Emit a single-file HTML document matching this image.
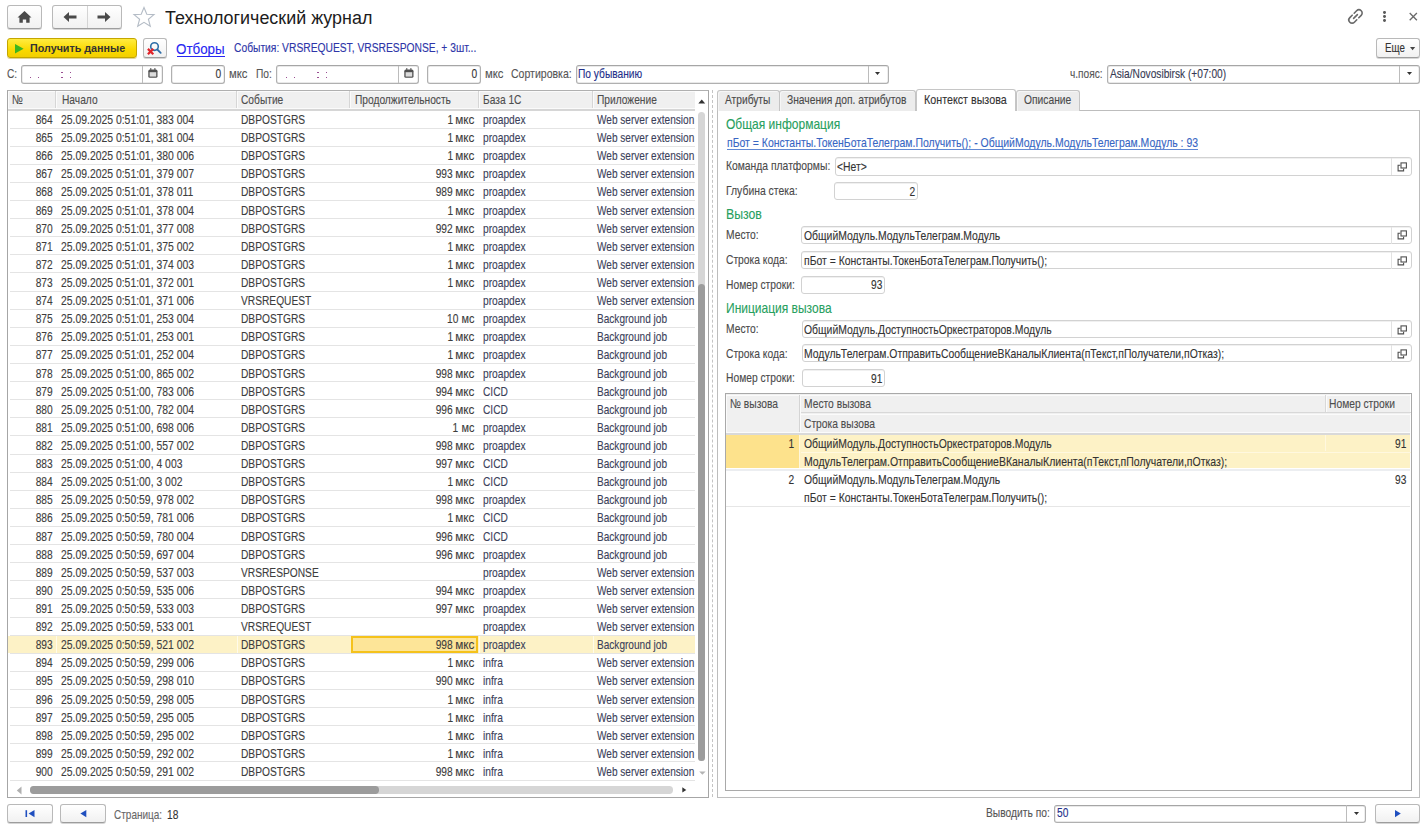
<!DOCTYPE html>
<html><head><meta charset="utf-8"><title>Технологический журнал</title>
<style>
html,body{margin:0;padding:0;background:#fff;width:1428px;height:829px;overflow:hidden;position:relative}
.a{position:absolute}
.t{position:absolute;font-family:"Liberation Sans",sans-serif;white-space:pre;transform-origin:0 0;-webkit-text-stroke:0.12px currentColor}
.tr{transform-origin:100% 0}
</style></head><body>
<div class="a" style="left:7.00px;top:5.00px;width:35.00px;height:24.00px;border:1px solid #b9b9b9;border-bottom-color:#9d9d9d;border-radius:3px;background:linear-gradient(#fff,#f1f1f1);box-sizing:border-box;box-shadow:0 1px 0 #d6d6d6"></div>
<svg class="a" style="left:16px;top:10px" width="17" height="14" viewBox="0 0 17 14"><path d="M8.5 1 L15.5 7.6 L13.6 7.6 L13.6 12.8 L10.2 12.8 L10.2 9.4 L6.8 9.4 L6.8 12.8 L3.4 12.8 L3.4 7.6 L1.5 7.6 Z" fill="#4a4a4a"/></svg>
<div class="a" style="left:52.00px;top:5.00px;width:70.00px;height:24.00px;border:1px solid #b9b9b9;border-bottom-color:#9d9d9d;border-radius:3px;background:linear-gradient(#fff,#f1f1f1);box-sizing:border-box;box-shadow:0 1px 0 #d6d6d6"></div>
<div class="a" style="left:87.00px;top:6.00px;width:1.00px;height:22.00px;background:#d4d4d4"></div>
<svg class="a" style="left:62px;top:11px" width="16" height="12" viewBox="0 0 16 12"><path d="M1.5 6 L7 1 L7 4.6 L14.5 4.6 L14.5 7.4 L7 7.4 L7 11 Z" fill="#4a4a4a"/></svg>
<svg class="a" style="left:96px;top:11px" width="16" height="12" viewBox="0 0 16 12"><path d="M14.5 6 L9 1 L9 4.6 L1.5 4.6 L1.5 7.4 L9 7.4 L9 11 Z" fill="#4a4a4a"/></svg>
<svg class="a" style="left:132px;top:6px" width="24" height="22" viewBox="0 0 24 22"><path d="M12 1.5 L14.8 8.3 L22 8.6 L16.4 13.2 L18.3 20.3 L12 16.3 L5.7 20.3 L7.6 13.2 L2 8.6 L9.2 8.3 Z" fill="none" stroke="#b4bcc6" stroke-width="1.1" stroke-linejoin="miter"/></svg>
<div class="t" style="left:165.00px;top:9.00px;font-size:18px;line-height:18px;color:#1c1c1c;font-weight:normal;transform:scaleX(0.995);-webkit-text-stroke:0;">Технологический журнал</div>
<svg class="a" style="left:1346px;top:7px" width="19" height="19" viewBox="0 0 19 19"><g fill="none" stroke="#6a6a6a" stroke-width="1.6" stroke-linecap="round"><path d="M8.2 6.2 L10.6 3.8 A2.7 2.7 0 0 1 15.2 8.4 L12.8 10.8"/><path d="M10.8 12.8 L8.4 15.2 A2.7 2.7 0 0 1 3.8 10.6 L6.2 8.2"/><path d="M7.6 11.4 L11.4 7.6"/></g></svg>
<div class="a" style="left:1382.80px;top:11.00px;width:2.8px;height:2.8px;border-radius:50%;background:#5a5a5a"></div>
<div class="a" style="left:1382.80px;top:14.90px;width:2.8px;height:2.8px;border-radius:50%;background:#5a5a5a"></div>
<div class="a" style="left:1382.80px;top:18.80px;width:2.8px;height:2.8px;border-radius:50%;background:#5a5a5a"></div>
<svg class="a" style="left:1408px;top:11px" width="11" height="11" viewBox="0 0 11 11"><path d="M1.7 2 L8.9 9.2 M8.9 2 L1.7 9.2" stroke="#6a6a6a" stroke-width="1.3"/></svg>
<div class="a" style="left:7.00px;top:38.00px;width:130.00px;height:19.50px;border:1px solid #c4a600;border-radius:3px;background:linear-gradient(#ffec40,#fad900 60%,#f2cf00);box-sizing:border-box;box-shadow:0 1px 0 #e0d49a"></div>
<svg class="a" style="left:15px;top:44px" width="9" height="10" viewBox="0 0 9 10"><path d="M0 0 L8.6 4.8 L0 9.6 Z" fill="#3cb521"/></svg>
<div class="t" style="left:30.00px;top:43.00px;font-size:11px;line-height:11px;color:#333;font-weight:bold;transform:scaleX(0.975);-webkit-text-stroke:0;">Получить данные</div>
<div class="a" style="left:142.50px;top:38.00px;width:24.50px;height:19.60px;border:1px solid #b9b9b9;border-bottom-color:#9d9d9d;border-radius:3px;background:linear-gradient(#fff,#f1f1f1);box-sizing:border-box;box-shadow:0 1px 0 #d6d6d6"></div>
<svg class="a" style="left:146px;top:41px" width="17" height="15" viewBox="0 0 17 15"><circle cx="8.5" cy="5.6" r="3.8" fill="none" stroke="#2f6ea8" stroke-width="1.6"/><path d="M11.3 8.5 L14.7 11.9" stroke="#2f6ea8" stroke-width="1.8" stroke-linecap="round"/><path d="M1.9 7.9 L7.3 13.3 M7.3 7.9 L1.9 13.3" stroke="#e0242a" stroke-width="2.2"/></svg>
<div class="t" style="left:176.40px;top:41.90px;font-size:14px;line-height:14px;color:#2626f2;font-weight:normal;transform:scaleX(0.955);">Отборы</div>
<div class="a" style="left:176.50px;top:55.70px;width:48.80px;height:1.20px;background:#2626f2"></div>
<div class="t" style="left:233.70px;top:42.20px;font-size:12px;line-height:12px;color:#2d35a8;font-weight:normal;transform:scaleX(0.856);">События: VRSREQUEST, VRSRESPONSE, + 3шт...</div>
<div class="a" style="left:1375.50px;top:38.20px;width:44.50px;height:19.60px;border:1px solid #b9b9b9;border-bottom-color:#9d9d9d;border-radius:3px;background:linear-gradient(#fff,#f1f1f1);box-sizing:border-box;box-shadow:0 1px 0 #d6d6d6"></div>
<div class="t" style="left:1385.30px;top:42.20px;font-size:12px;line-height:12px;color:#333;font-weight:normal;transform:scaleX(0.815);">Еще</div>
<svg class="a" style="left:1410px;top:47px" width="6" height="4" viewBox="0 0 6 4"><path d="M0 0 L5.2 0 L2.6 3.2 Z" fill="#444"/></svg>
<div class="t" style="left:7.00px;top:67.00px;font-size:13px;line-height:13px;color:#555;font-weight:normal;transform:scaleX(0.785);">С:</div>
<div class="a" style="left:20.50px;top:64.70px;width:142.80px;height:18.90px;border:1px solid #b0b0b0;border-top-color:#a6a6a6;border-radius:3px;background:#fff;box-sizing:border-box;box-shadow:inset 0 0 0 0.4px #d4d4d4"></div>
<div class="a" style="left:142.20px;top:65.50px;width:1.00px;height:17.30px;background:#bcbcbc"></div>
<svg class="a" style="left:148px;top:68px" width="10" height="10" viewBox="0 0 10 10"><rect x="0.3" y="1.6" width="9.2" height="8.2" rx="1.6" fill="#505050"/><rect x="1.6" y="4.2" width="6.6" height="4.4" fill="#dcdcdc"/><path d="M2.8 0 V2.6 M6.9 0 V2.6" stroke="#505050" stroke-width="1"/></svg>
<div class="a" style="left:29.55px;top:76.65px;width:1.50px;height:1.50px;background:#9a4e92"></div>
<div class="a" style="left:37.95px;top:76.65px;width:1.50px;height:1.50px;background:#9a4e92"></div>
<div class="a" style="left:61.05px;top:76.65px;width:1.50px;height:1.50px;background:#9a4e92"></div>
<div class="a" style="left:69.65px;top:76.65px;width:1.50px;height:1.50px;background:#9a4e92"></div>
<div class="a" style="left:61.05px;top:71.85px;width:1.50px;height:1.50px;background:#9a4e92"></div>
<div class="a" style="left:69.65px;top:71.85px;width:1.50px;height:1.50px;background:#9a4e92"></div>
<div class="a" style="left:171.40px;top:64.70px;width:53.80px;height:18.90px;border:1px solid #b0b0b0;border-top-color:#a6a6a6;border-radius:3px;background:#fff;box-sizing:border-box;box-shadow:inset 0 0 0 0.4px #d4d4d4"></div>
<div class="t tr" style="right:1206.50px;top:67.00px;font-size:13px;line-height:13px;color:#333;font-weight:normal;transform:scaleX(0.785);">0</div>
<div class="t" style="left:229.00px;top:67.00px;font-size:13px;line-height:13px;color:#555;font-weight:normal;transform:scaleX(0.87);">мкс</div>
<div class="t" style="left:256.00px;top:67.00px;font-size:13px;line-height:13px;color:#555;font-weight:normal;transform:scaleX(0.785);">По:</div>
<div class="a" style="left:276.40px;top:64.70px;width:142.20px;height:18.90px;border:1px solid #b0b0b0;border-top-color:#a6a6a6;border-radius:3px;background:#fff;box-sizing:border-box;box-shadow:inset 0 0 0 0.4px #d4d4d4"></div>
<div class="a" style="left:397.90px;top:65.50px;width:1.00px;height:17.30px;background:#bcbcbc"></div>
<svg class="a" style="left:403.5px;top:68px" width="10" height="10" viewBox="0 0 10 10"><rect x="0.3" y="1.6" width="9.2" height="8.2" rx="1.6" fill="#505050"/><rect x="1.6" y="4.2" width="6.6" height="4.4" fill="#dcdcdc"/><path d="M2.8 0 V2.6 M6.9 0 V2.6" stroke="#505050" stroke-width="1"/></svg>
<div class="a" style="left:285.55px;top:76.65px;width:1.50px;height:1.50px;background:#9a4e92"></div>
<div class="a" style="left:293.95px;top:76.65px;width:1.50px;height:1.50px;background:#9a4e92"></div>
<div class="a" style="left:317.05px;top:76.65px;width:1.50px;height:1.50px;background:#9a4e92"></div>
<div class="a" style="left:325.65px;top:76.65px;width:1.50px;height:1.50px;background:#9a4e92"></div>
<div class="a" style="left:317.05px;top:71.85px;width:1.50px;height:1.50px;background:#9a4e92"></div>
<div class="a" style="left:325.65px;top:71.85px;width:1.50px;height:1.50px;background:#9a4e92"></div>
<div class="a" style="left:426.90px;top:64.70px;width:54.30px;height:18.90px;border:1px solid #b0b0b0;border-top-color:#a6a6a6;border-radius:3px;background:#fff;box-sizing:border-box;box-shadow:inset 0 0 0 0.4px #d4d4d4"></div>
<div class="t tr" style="right:950.50px;top:67.00px;font-size:13px;line-height:13px;color:#333;font-weight:normal;transform:scaleX(0.785);">0</div>
<div class="t" style="left:485.00px;top:67.00px;font-size:13px;line-height:13px;color:#555;font-weight:normal;transform:scaleX(0.87);">мкс</div>
<div class="t" style="left:511.00px;top:67.00px;font-size:13px;line-height:13px;color:#555;font-weight:normal;transform:scaleX(0.81);">Сортировка:</div>
<div class="a" style="left:575.90px;top:64.70px;width:313.00px;height:18.90px;border:1px solid #b0b0b0;border-top-color:#a6a6a6;border-radius:3px;background:#fff;box-sizing:border-box;box-shadow:inset 0 0 0 0.4px #d4d4d4"></div>
<div class="a" style="left:867.70px;top:65.50px;width:1.00px;height:17.30px;background:#bcbcbc"></div>
<div class="t" style="left:578.40px;top:67.00px;font-size:13px;line-height:13px;color:#24308a;font-weight:normal;transform:scaleX(0.785);">По убыванию</div>
<svg class="a" style="left:875px;top:72px" width="6" height="4" viewBox="0 0 6 4"><path d="M0 0 L5 0 L2.5 3 Z" fill="#333"/></svg>
<div class="t" style="left:1070.00px;top:67.00px;font-size:13px;line-height:13px;color:#555;font-weight:normal;transform:scaleX(0.78);">ч.пояс:</div>
<div class="a" style="left:1106.90px;top:64.80px;width:313.10px;height:18.80px;border:1px solid #b0b0b0;border-top-color:#a6a6a6;border-radius:3px;background:#fff;box-sizing:border-box;box-shadow:inset 0 0 0 0.4px #d4d4d4"></div>
<div class="a" style="left:1399.30px;top:65.70px;width:1.00px;height:17.10px;background:#bcbcbc"></div>
<div class="t" style="left:1110.00px;top:67.00px;font-size:13px;line-height:13px;color:#363a52;font-weight:normal;transform:scaleX(0.782);">Asia/Novosibirsk (+07:00)</div>
<svg class="a" style="left:1406.5px;top:72px" width="6" height="4" viewBox="0 0 6 4"><path d="M0 0 L5 0 L2.5 3 Z" fill="#333"/></svg>
<div class="a" style="left:7.00px;top:89.60px;width:702.00px;height:708.20px;border:1px solid #a6a6a6;border-top:1.5px solid #b0b0b0;box-sizing:border-box;background:#fff"></div>
<div class="a" style="left:8.00px;top:90.50px;width:687.00px;height:20.40px;background:#f0f0f0"></div>
<div class="a" style="left:8.00px;top:90.60px;width:687.00px;height:1.20px;background:#fbfbfb"></div>
<div class="a" style="left:8.00px;top:90.60px;width:1.20px;height:17.70px;background:#fbfbfb"></div>
<div class="a" style="left:8.00px;top:108.20px;width:687.00px;height:1.10px;background:#fbfbfb"></div>
<div class="a" style="left:8.00px;top:109.30px;width:687.00px;height:1.60px;background:#d6d6d6"></div>
<div class="a" style="left:55.20px;top:91.00px;width:1.10px;height:17.30px;background:#d6d6d6"></div>
<div class="a" style="left:56.30px;top:91.00px;width:1.00px;height:17.30px;background:#fbfbfb"></div>
<div class="a" style="left:235.70px;top:91.00px;width:1.10px;height:17.30px;background:#d6d6d6"></div>
<div class="a" style="left:236.80px;top:91.00px;width:1.00px;height:17.30px;background:#fbfbfb"></div>
<div class="a" style="left:349.30px;top:91.00px;width:1.10px;height:17.30px;background:#d6d6d6"></div>
<div class="a" style="left:350.40px;top:91.00px;width:1.00px;height:17.30px;background:#fbfbfb"></div>
<div class="a" style="left:478.00px;top:91.00px;width:1.10px;height:17.30px;background:#d6d6d6"></div>
<div class="a" style="left:479.10px;top:91.00px;width:1.00px;height:17.30px;background:#fbfbfb"></div>
<div class="a" style="left:591.80px;top:91.00px;width:1.10px;height:17.30px;background:#d6d6d6"></div>
<div class="a" style="left:592.90px;top:91.00px;width:1.00px;height:17.30px;background:#fbfbfb"></div>
<div class="t" style="left:12.00px;top:93.00px;font-size:13px;line-height:13px;color:#4d4d4d;font-weight:normal;transform:scaleX(0.785);">№</div>
<div class="t" style="left:61.50px;top:93.00px;font-size:13px;line-height:13px;color:#4d4d4d;font-weight:normal;transform:scaleX(0.785);">Начало</div>
<div class="t" style="left:240.70px;top:93.00px;font-size:13px;line-height:13px;color:#4d4d4d;font-weight:normal;transform:scaleX(0.785);">Событие</div>
<div class="t" style="left:354.60px;top:93.00px;font-size:13px;line-height:13px;color:#4d4d4d;font-weight:normal;transform:scaleX(0.785);">Продолжительность</div>
<div class="t" style="left:482.90px;top:93.00px;font-size:13px;line-height:13px;color:#4d4d4d;font-weight:normal;transform:scaleX(0.785);">База 1С</div>
<div class="t" style="left:596.80px;top:93.00px;font-size:13px;line-height:13px;color:#4d4d4d;font-weight:normal;transform:scaleX(0.785);">Приложение</div>
<div class="a" style="left:10.00px;top:127.60px;width:685.00px;height:1.00px;background:#e4e4e4"></div>
<div class="t tr" style="right:1375.20px;top:113.00px;font-size:13px;line-height:13px;color:#3d3d3d;font-weight:normal;transform:scaleX(0.785);">864</div>
<div class="t" style="left:61.00px;top:113.00px;font-size:13px;line-height:13px;color:#3d3d3d;font-weight:normal;transform:scaleX(0.8);">25.09.2025 0:51:01, 383 004</div>
<div class="t" style="left:240.70px;top:113.00px;font-size:13px;line-height:13px;color:#3d3d3d;font-weight:normal;transform:scaleX(0.785);">DBPOSTGRS</div>
<div class="t tr" style="right:975.20px;top:113.00px;font-size:13px;line-height:13px;color:#3d3d3d;font-weight:normal;transform:scaleX(0.785);">1</div>
<div class="t tr" style="right:953.60px;top:113.00px;font-size:13px;line-height:13px;color:#3d3d3d;font-weight:normal;transform:scaleX(0.9);">мкс</div>
<div class="t" style="left:482.90px;top:113.00px;font-size:13px;line-height:13px;color:#3b3f5a;font-weight:normal;transform:scaleX(0.785);">proapdex</div>
<div class="t" style="left:596.80px;top:113.00px;font-size:13px;line-height:13px;color:#3b3f5a;font-weight:normal;transform:scaleX(0.775);">Web server extension</div>
<div class="a" style="left:10.00px;top:145.71px;width:685.00px;height:1.00px;background:#e4e4e4"></div>
<div class="t tr" style="right:1375.20px;top:131.11px;font-size:13px;line-height:13px;color:#3d3d3d;font-weight:normal;transform:scaleX(0.785);">865</div>
<div class="t" style="left:61.00px;top:131.11px;font-size:13px;line-height:13px;color:#3d3d3d;font-weight:normal;transform:scaleX(0.8);">25.09.2025 0:51:01, 381 004</div>
<div class="t" style="left:240.70px;top:131.11px;font-size:13px;line-height:13px;color:#3d3d3d;font-weight:normal;transform:scaleX(0.785);">DBPOSTGRS</div>
<div class="t tr" style="right:975.20px;top:131.11px;font-size:13px;line-height:13px;color:#3d3d3d;font-weight:normal;transform:scaleX(0.785);">1</div>
<div class="t tr" style="right:953.60px;top:131.11px;font-size:13px;line-height:13px;color:#3d3d3d;font-weight:normal;transform:scaleX(0.9);">мкс</div>
<div class="t" style="left:482.90px;top:131.11px;font-size:13px;line-height:13px;color:#3b3f5a;font-weight:normal;transform:scaleX(0.785);">proapdex</div>
<div class="t" style="left:596.80px;top:131.11px;font-size:13px;line-height:13px;color:#3b3f5a;font-weight:normal;transform:scaleX(0.775);">Web server extension</div>
<div class="a" style="left:10.00px;top:163.82px;width:685.00px;height:1.00px;background:#e4e4e4"></div>
<div class="t tr" style="right:1375.20px;top:149.22px;font-size:13px;line-height:13px;color:#3d3d3d;font-weight:normal;transform:scaleX(0.785);">866</div>
<div class="t" style="left:61.00px;top:149.22px;font-size:13px;line-height:13px;color:#3d3d3d;font-weight:normal;transform:scaleX(0.8);">25.09.2025 0:51:01, 380 006</div>
<div class="t" style="left:240.70px;top:149.22px;font-size:13px;line-height:13px;color:#3d3d3d;font-weight:normal;transform:scaleX(0.785);">DBPOSTGRS</div>
<div class="t tr" style="right:975.20px;top:149.22px;font-size:13px;line-height:13px;color:#3d3d3d;font-weight:normal;transform:scaleX(0.785);">1</div>
<div class="t tr" style="right:953.60px;top:149.22px;font-size:13px;line-height:13px;color:#3d3d3d;font-weight:normal;transform:scaleX(0.9);">мкс</div>
<div class="t" style="left:482.90px;top:149.22px;font-size:13px;line-height:13px;color:#3b3f5a;font-weight:normal;transform:scaleX(0.785);">proapdex</div>
<div class="t" style="left:596.80px;top:149.22px;font-size:13px;line-height:13px;color:#3b3f5a;font-weight:normal;transform:scaleX(0.775);">Web server extension</div>
<div class="a" style="left:10.00px;top:181.93px;width:685.00px;height:1.00px;background:#e4e4e4"></div>
<div class="t tr" style="right:1375.20px;top:167.33px;font-size:13px;line-height:13px;color:#3d3d3d;font-weight:normal;transform:scaleX(0.785);">867</div>
<div class="t" style="left:61.00px;top:167.33px;font-size:13px;line-height:13px;color:#3d3d3d;font-weight:normal;transform:scaleX(0.8);">25.09.2025 0:51:01, 379 007</div>
<div class="t" style="left:240.70px;top:167.33px;font-size:13px;line-height:13px;color:#3d3d3d;font-weight:normal;transform:scaleX(0.785);">DBPOSTGRS</div>
<div class="t tr" style="right:975.20px;top:167.33px;font-size:13px;line-height:13px;color:#3d3d3d;font-weight:normal;transform:scaleX(0.785);">993</div>
<div class="t tr" style="right:953.60px;top:167.33px;font-size:13px;line-height:13px;color:#3d3d3d;font-weight:normal;transform:scaleX(0.9);">мкс</div>
<div class="t" style="left:482.90px;top:167.33px;font-size:13px;line-height:13px;color:#3b3f5a;font-weight:normal;transform:scaleX(0.785);">proapdex</div>
<div class="t" style="left:596.80px;top:167.33px;font-size:13px;line-height:13px;color:#3b3f5a;font-weight:normal;transform:scaleX(0.775);">Web server extension</div>
<div class="a" style="left:10.00px;top:200.04px;width:685.00px;height:1.00px;background:#e4e4e4"></div>
<div class="t tr" style="right:1375.20px;top:185.44px;font-size:13px;line-height:13px;color:#3d3d3d;font-weight:normal;transform:scaleX(0.785);">868</div>
<div class="t" style="left:61.00px;top:185.44px;font-size:13px;line-height:13px;color:#3d3d3d;font-weight:normal;transform:scaleX(0.8);">25.09.2025 0:51:01, 378 011</div>
<div class="t" style="left:240.70px;top:185.44px;font-size:13px;line-height:13px;color:#3d3d3d;font-weight:normal;transform:scaleX(0.785);">DBPOSTGRS</div>
<div class="t tr" style="right:975.20px;top:185.44px;font-size:13px;line-height:13px;color:#3d3d3d;font-weight:normal;transform:scaleX(0.785);">989</div>
<div class="t tr" style="right:953.60px;top:185.44px;font-size:13px;line-height:13px;color:#3d3d3d;font-weight:normal;transform:scaleX(0.9);">мкс</div>
<div class="t" style="left:482.90px;top:185.44px;font-size:13px;line-height:13px;color:#3b3f5a;font-weight:normal;transform:scaleX(0.785);">proapdex</div>
<div class="t" style="left:596.80px;top:185.44px;font-size:13px;line-height:13px;color:#3b3f5a;font-weight:normal;transform:scaleX(0.775);">Web server extension</div>
<div class="a" style="left:10.00px;top:218.15px;width:685.00px;height:1.00px;background:#e4e4e4"></div>
<div class="t tr" style="right:1375.20px;top:203.55px;font-size:13px;line-height:13px;color:#3d3d3d;font-weight:normal;transform:scaleX(0.785);">869</div>
<div class="t" style="left:61.00px;top:203.55px;font-size:13px;line-height:13px;color:#3d3d3d;font-weight:normal;transform:scaleX(0.8);">25.09.2025 0:51:01, 378 004</div>
<div class="t" style="left:240.70px;top:203.55px;font-size:13px;line-height:13px;color:#3d3d3d;font-weight:normal;transform:scaleX(0.785);">DBPOSTGRS</div>
<div class="t tr" style="right:975.20px;top:203.55px;font-size:13px;line-height:13px;color:#3d3d3d;font-weight:normal;transform:scaleX(0.785);">1</div>
<div class="t tr" style="right:953.60px;top:203.55px;font-size:13px;line-height:13px;color:#3d3d3d;font-weight:normal;transform:scaleX(0.9);">мкс</div>
<div class="t" style="left:482.90px;top:203.55px;font-size:13px;line-height:13px;color:#3b3f5a;font-weight:normal;transform:scaleX(0.785);">proapdex</div>
<div class="t" style="left:596.80px;top:203.55px;font-size:13px;line-height:13px;color:#3b3f5a;font-weight:normal;transform:scaleX(0.775);">Web server extension</div>
<div class="a" style="left:10.00px;top:236.26px;width:685.00px;height:1.00px;background:#e4e4e4"></div>
<div class="t tr" style="right:1375.20px;top:221.66px;font-size:13px;line-height:13px;color:#3d3d3d;font-weight:normal;transform:scaleX(0.785);">870</div>
<div class="t" style="left:61.00px;top:221.66px;font-size:13px;line-height:13px;color:#3d3d3d;font-weight:normal;transform:scaleX(0.8);">25.09.2025 0:51:01, 377 008</div>
<div class="t" style="left:240.70px;top:221.66px;font-size:13px;line-height:13px;color:#3d3d3d;font-weight:normal;transform:scaleX(0.785);">DBPOSTGRS</div>
<div class="t tr" style="right:975.20px;top:221.66px;font-size:13px;line-height:13px;color:#3d3d3d;font-weight:normal;transform:scaleX(0.785);">992</div>
<div class="t tr" style="right:953.60px;top:221.66px;font-size:13px;line-height:13px;color:#3d3d3d;font-weight:normal;transform:scaleX(0.9);">мкс</div>
<div class="t" style="left:482.90px;top:221.66px;font-size:13px;line-height:13px;color:#3b3f5a;font-weight:normal;transform:scaleX(0.785);">proapdex</div>
<div class="t" style="left:596.80px;top:221.66px;font-size:13px;line-height:13px;color:#3b3f5a;font-weight:normal;transform:scaleX(0.775);">Web server extension</div>
<div class="a" style="left:10.00px;top:254.37px;width:685.00px;height:1.00px;background:#e4e4e4"></div>
<div class="t tr" style="right:1375.20px;top:239.77px;font-size:13px;line-height:13px;color:#3d3d3d;font-weight:normal;transform:scaleX(0.785);">871</div>
<div class="t" style="left:61.00px;top:239.77px;font-size:13px;line-height:13px;color:#3d3d3d;font-weight:normal;transform:scaleX(0.8);">25.09.2025 0:51:01, 375 002</div>
<div class="t" style="left:240.70px;top:239.77px;font-size:13px;line-height:13px;color:#3d3d3d;font-weight:normal;transform:scaleX(0.785);">DBPOSTGRS</div>
<div class="t tr" style="right:975.20px;top:239.77px;font-size:13px;line-height:13px;color:#3d3d3d;font-weight:normal;transform:scaleX(0.785);">1</div>
<div class="t tr" style="right:953.60px;top:239.77px;font-size:13px;line-height:13px;color:#3d3d3d;font-weight:normal;transform:scaleX(0.9);">мкс</div>
<div class="t" style="left:482.90px;top:239.77px;font-size:13px;line-height:13px;color:#3b3f5a;font-weight:normal;transform:scaleX(0.785);">proapdex</div>
<div class="t" style="left:596.80px;top:239.77px;font-size:13px;line-height:13px;color:#3b3f5a;font-weight:normal;transform:scaleX(0.775);">Web server extension</div>
<div class="a" style="left:10.00px;top:272.48px;width:685.00px;height:1.00px;background:#e4e4e4"></div>
<div class="t tr" style="right:1375.20px;top:257.88px;font-size:13px;line-height:13px;color:#3d3d3d;font-weight:normal;transform:scaleX(0.785);">872</div>
<div class="t" style="left:61.00px;top:257.88px;font-size:13px;line-height:13px;color:#3d3d3d;font-weight:normal;transform:scaleX(0.8);">25.09.2025 0:51:01, 374 003</div>
<div class="t" style="left:240.70px;top:257.88px;font-size:13px;line-height:13px;color:#3d3d3d;font-weight:normal;transform:scaleX(0.785);">DBPOSTGRS</div>
<div class="t tr" style="right:975.20px;top:257.88px;font-size:13px;line-height:13px;color:#3d3d3d;font-weight:normal;transform:scaleX(0.785);">1</div>
<div class="t tr" style="right:953.60px;top:257.88px;font-size:13px;line-height:13px;color:#3d3d3d;font-weight:normal;transform:scaleX(0.9);">мкс</div>
<div class="t" style="left:482.90px;top:257.88px;font-size:13px;line-height:13px;color:#3b3f5a;font-weight:normal;transform:scaleX(0.785);">proapdex</div>
<div class="t" style="left:596.80px;top:257.88px;font-size:13px;line-height:13px;color:#3b3f5a;font-weight:normal;transform:scaleX(0.775);">Web server extension</div>
<div class="a" style="left:10.00px;top:290.59px;width:685.00px;height:1.00px;background:#e4e4e4"></div>
<div class="t tr" style="right:1375.20px;top:275.99px;font-size:13px;line-height:13px;color:#3d3d3d;font-weight:normal;transform:scaleX(0.785);">873</div>
<div class="t" style="left:61.00px;top:275.99px;font-size:13px;line-height:13px;color:#3d3d3d;font-weight:normal;transform:scaleX(0.8);">25.09.2025 0:51:01, 372 001</div>
<div class="t" style="left:240.70px;top:275.99px;font-size:13px;line-height:13px;color:#3d3d3d;font-weight:normal;transform:scaleX(0.785);">DBPOSTGRS</div>
<div class="t tr" style="right:975.20px;top:275.99px;font-size:13px;line-height:13px;color:#3d3d3d;font-weight:normal;transform:scaleX(0.785);">1</div>
<div class="t tr" style="right:953.60px;top:275.99px;font-size:13px;line-height:13px;color:#3d3d3d;font-weight:normal;transform:scaleX(0.9);">мкс</div>
<div class="t" style="left:482.90px;top:275.99px;font-size:13px;line-height:13px;color:#3b3f5a;font-weight:normal;transform:scaleX(0.785);">proapdex</div>
<div class="t" style="left:596.80px;top:275.99px;font-size:13px;line-height:13px;color:#3b3f5a;font-weight:normal;transform:scaleX(0.775);">Web server extension</div>
<div class="a" style="left:10.00px;top:308.70px;width:685.00px;height:1.00px;background:#e4e4e4"></div>
<div class="t tr" style="right:1375.20px;top:294.10px;font-size:13px;line-height:13px;color:#3d3d3d;font-weight:normal;transform:scaleX(0.785);">874</div>
<div class="t" style="left:61.00px;top:294.10px;font-size:13px;line-height:13px;color:#3d3d3d;font-weight:normal;transform:scaleX(0.8);">25.09.2025 0:51:01, 371 006</div>
<div class="t" style="left:240.70px;top:294.10px;font-size:13px;line-height:13px;color:#3d3d3d;font-weight:normal;transform:scaleX(0.785);">VRSREQUEST</div>
<div class="t" style="left:482.90px;top:294.10px;font-size:13px;line-height:13px;color:#3b3f5a;font-weight:normal;transform:scaleX(0.785);">proapdex</div>
<div class="t" style="left:596.80px;top:294.10px;font-size:13px;line-height:13px;color:#3b3f5a;font-weight:normal;transform:scaleX(0.775);">Web server extension</div>
<div class="a" style="left:10.00px;top:326.81px;width:685.00px;height:1.00px;background:#e4e4e4"></div>
<div class="t tr" style="right:1375.20px;top:312.21px;font-size:13px;line-height:13px;color:#3d3d3d;font-weight:normal;transform:scaleX(0.785);">875</div>
<div class="t" style="left:61.00px;top:312.21px;font-size:13px;line-height:13px;color:#3d3d3d;font-weight:normal;transform:scaleX(0.8);">25.09.2025 0:51:01, 253 004</div>
<div class="t" style="left:240.70px;top:312.21px;font-size:13px;line-height:13px;color:#3d3d3d;font-weight:normal;transform:scaleX(0.785);">DBPOSTGRS</div>
<div class="t tr" style="right:969.70px;top:312.21px;font-size:13px;line-height:13px;color:#3d3d3d;font-weight:normal;transform:scaleX(0.785);">10</div>
<div class="t tr" style="right:953.60px;top:312.21px;font-size:13px;line-height:13px;color:#3d3d3d;font-weight:normal;transform:scaleX(0.84);">мс</div>
<div class="t" style="left:482.90px;top:312.21px;font-size:13px;line-height:13px;color:#3b3f5a;font-weight:normal;transform:scaleX(0.785);">proapdex</div>
<div class="t" style="left:596.80px;top:312.21px;font-size:13px;line-height:13px;color:#3b3f5a;font-weight:normal;transform:scaleX(0.775);">Background job</div>
<div class="a" style="left:10.00px;top:344.92px;width:685.00px;height:1.00px;background:#e4e4e4"></div>
<div class="t tr" style="right:1375.20px;top:330.32px;font-size:13px;line-height:13px;color:#3d3d3d;font-weight:normal;transform:scaleX(0.785);">876</div>
<div class="t" style="left:61.00px;top:330.32px;font-size:13px;line-height:13px;color:#3d3d3d;font-weight:normal;transform:scaleX(0.8);">25.09.2025 0:51:01, 253 001</div>
<div class="t" style="left:240.70px;top:330.32px;font-size:13px;line-height:13px;color:#3d3d3d;font-weight:normal;transform:scaleX(0.785);">DBPOSTGRS</div>
<div class="t tr" style="right:975.20px;top:330.32px;font-size:13px;line-height:13px;color:#3d3d3d;font-weight:normal;transform:scaleX(0.785);">1</div>
<div class="t tr" style="right:953.60px;top:330.32px;font-size:13px;line-height:13px;color:#3d3d3d;font-weight:normal;transform:scaleX(0.9);">мкс</div>
<div class="t" style="left:482.90px;top:330.32px;font-size:13px;line-height:13px;color:#3b3f5a;font-weight:normal;transform:scaleX(0.785);">proapdex</div>
<div class="t" style="left:596.80px;top:330.32px;font-size:13px;line-height:13px;color:#3b3f5a;font-weight:normal;transform:scaleX(0.775);">Background job</div>
<div class="a" style="left:10.00px;top:363.03px;width:685.00px;height:1.00px;background:#e4e4e4"></div>
<div class="t tr" style="right:1375.20px;top:348.43px;font-size:13px;line-height:13px;color:#3d3d3d;font-weight:normal;transform:scaleX(0.785);">877</div>
<div class="t" style="left:61.00px;top:348.43px;font-size:13px;line-height:13px;color:#3d3d3d;font-weight:normal;transform:scaleX(0.8);">25.09.2025 0:51:01, 252 004</div>
<div class="t" style="left:240.70px;top:348.43px;font-size:13px;line-height:13px;color:#3d3d3d;font-weight:normal;transform:scaleX(0.785);">DBPOSTGRS</div>
<div class="t tr" style="right:975.20px;top:348.43px;font-size:13px;line-height:13px;color:#3d3d3d;font-weight:normal;transform:scaleX(0.785);">1</div>
<div class="t tr" style="right:953.60px;top:348.43px;font-size:13px;line-height:13px;color:#3d3d3d;font-weight:normal;transform:scaleX(0.9);">мкс</div>
<div class="t" style="left:482.90px;top:348.43px;font-size:13px;line-height:13px;color:#3b3f5a;font-weight:normal;transform:scaleX(0.785);">proapdex</div>
<div class="t" style="left:596.80px;top:348.43px;font-size:13px;line-height:13px;color:#3b3f5a;font-weight:normal;transform:scaleX(0.775);">Background job</div>
<div class="a" style="left:10.00px;top:381.14px;width:685.00px;height:1.00px;background:#e4e4e4"></div>
<div class="t tr" style="right:1375.20px;top:366.54px;font-size:13px;line-height:13px;color:#3d3d3d;font-weight:normal;transform:scaleX(0.785);">878</div>
<div class="t" style="left:61.00px;top:366.54px;font-size:13px;line-height:13px;color:#3d3d3d;font-weight:normal;transform:scaleX(0.8);">25.09.2025 0:51:00, 865 002</div>
<div class="t" style="left:240.70px;top:366.54px;font-size:13px;line-height:13px;color:#3d3d3d;font-weight:normal;transform:scaleX(0.785);">DBPOSTGRS</div>
<div class="t tr" style="right:975.20px;top:366.54px;font-size:13px;line-height:13px;color:#3d3d3d;font-weight:normal;transform:scaleX(0.785);">998</div>
<div class="t tr" style="right:953.60px;top:366.54px;font-size:13px;line-height:13px;color:#3d3d3d;font-weight:normal;transform:scaleX(0.9);">мкс</div>
<div class="t" style="left:482.90px;top:366.54px;font-size:13px;line-height:13px;color:#3b3f5a;font-weight:normal;transform:scaleX(0.785);">proapdex</div>
<div class="t" style="left:596.80px;top:366.54px;font-size:13px;line-height:13px;color:#3b3f5a;font-weight:normal;transform:scaleX(0.775);">Background job</div>
<div class="a" style="left:10.00px;top:399.25px;width:685.00px;height:1.00px;background:#e4e4e4"></div>
<div class="t tr" style="right:1375.20px;top:384.65px;font-size:13px;line-height:13px;color:#3d3d3d;font-weight:normal;transform:scaleX(0.785);">879</div>
<div class="t" style="left:61.00px;top:384.65px;font-size:13px;line-height:13px;color:#3d3d3d;font-weight:normal;transform:scaleX(0.8);">25.09.2025 0:51:00, 783 006</div>
<div class="t" style="left:240.70px;top:384.65px;font-size:13px;line-height:13px;color:#3d3d3d;font-weight:normal;transform:scaleX(0.785);">DBPOSTGRS</div>
<div class="t tr" style="right:975.20px;top:384.65px;font-size:13px;line-height:13px;color:#3d3d3d;font-weight:normal;transform:scaleX(0.785);">994</div>
<div class="t tr" style="right:953.60px;top:384.65px;font-size:13px;line-height:13px;color:#3d3d3d;font-weight:normal;transform:scaleX(0.9);">мкс</div>
<div class="t" style="left:482.90px;top:384.65px;font-size:13px;line-height:13px;color:#3b3f5a;font-weight:normal;transform:scaleX(0.785);">CICD</div>
<div class="t" style="left:596.80px;top:384.65px;font-size:13px;line-height:13px;color:#3b3f5a;font-weight:normal;transform:scaleX(0.775);">Background job</div>
<div class="a" style="left:10.00px;top:417.36px;width:685.00px;height:1.00px;background:#e4e4e4"></div>
<div class="t tr" style="right:1375.20px;top:402.76px;font-size:13px;line-height:13px;color:#3d3d3d;font-weight:normal;transform:scaleX(0.785);">880</div>
<div class="t" style="left:61.00px;top:402.76px;font-size:13px;line-height:13px;color:#3d3d3d;font-weight:normal;transform:scaleX(0.8);">25.09.2025 0:51:00, 782 004</div>
<div class="t" style="left:240.70px;top:402.76px;font-size:13px;line-height:13px;color:#3d3d3d;font-weight:normal;transform:scaleX(0.785);">DBPOSTGRS</div>
<div class="t tr" style="right:975.20px;top:402.76px;font-size:13px;line-height:13px;color:#3d3d3d;font-weight:normal;transform:scaleX(0.785);">996</div>
<div class="t tr" style="right:953.60px;top:402.76px;font-size:13px;line-height:13px;color:#3d3d3d;font-weight:normal;transform:scaleX(0.9);">мкс</div>
<div class="t" style="left:482.90px;top:402.76px;font-size:13px;line-height:13px;color:#3b3f5a;font-weight:normal;transform:scaleX(0.785);">CICD</div>
<div class="t" style="left:596.80px;top:402.76px;font-size:13px;line-height:13px;color:#3b3f5a;font-weight:normal;transform:scaleX(0.775);">Background job</div>
<div class="a" style="left:10.00px;top:435.47px;width:685.00px;height:1.00px;background:#e4e4e4"></div>
<div class="t tr" style="right:1375.20px;top:420.87px;font-size:13px;line-height:13px;color:#3d3d3d;font-weight:normal;transform:scaleX(0.785);">881</div>
<div class="t" style="left:61.00px;top:420.87px;font-size:13px;line-height:13px;color:#3d3d3d;font-weight:normal;transform:scaleX(0.8);">25.09.2025 0:51:00, 698 006</div>
<div class="t" style="left:240.70px;top:420.87px;font-size:13px;line-height:13px;color:#3d3d3d;font-weight:normal;transform:scaleX(0.785);">DBPOSTGRS</div>
<div class="t tr" style="right:969.70px;top:420.87px;font-size:13px;line-height:13px;color:#3d3d3d;font-weight:normal;transform:scaleX(0.785);">1</div>
<div class="t tr" style="right:953.60px;top:420.87px;font-size:13px;line-height:13px;color:#3d3d3d;font-weight:normal;transform:scaleX(0.84);">мс</div>
<div class="t" style="left:482.90px;top:420.87px;font-size:13px;line-height:13px;color:#3b3f5a;font-weight:normal;transform:scaleX(0.785);">proapdex</div>
<div class="t" style="left:596.80px;top:420.87px;font-size:13px;line-height:13px;color:#3b3f5a;font-weight:normal;transform:scaleX(0.775);">Background job</div>
<div class="a" style="left:10.00px;top:453.58px;width:685.00px;height:1.00px;background:#e4e4e4"></div>
<div class="t tr" style="right:1375.20px;top:438.98px;font-size:13px;line-height:13px;color:#3d3d3d;font-weight:normal;transform:scaleX(0.785);">882</div>
<div class="t" style="left:61.00px;top:438.98px;font-size:13px;line-height:13px;color:#3d3d3d;font-weight:normal;transform:scaleX(0.8);">25.09.2025 0:51:00, 557 002</div>
<div class="t" style="left:240.70px;top:438.98px;font-size:13px;line-height:13px;color:#3d3d3d;font-weight:normal;transform:scaleX(0.785);">DBPOSTGRS</div>
<div class="t tr" style="right:975.20px;top:438.98px;font-size:13px;line-height:13px;color:#3d3d3d;font-weight:normal;transform:scaleX(0.785);">998</div>
<div class="t tr" style="right:953.60px;top:438.98px;font-size:13px;line-height:13px;color:#3d3d3d;font-weight:normal;transform:scaleX(0.9);">мкс</div>
<div class="t" style="left:482.90px;top:438.98px;font-size:13px;line-height:13px;color:#3b3f5a;font-weight:normal;transform:scaleX(0.785);">proapdex</div>
<div class="t" style="left:596.80px;top:438.98px;font-size:13px;line-height:13px;color:#3b3f5a;font-weight:normal;transform:scaleX(0.775);">Background job</div>
<div class="a" style="left:10.00px;top:471.69px;width:685.00px;height:1.00px;background:#e4e4e4"></div>
<div class="t tr" style="right:1375.20px;top:457.09px;font-size:13px;line-height:13px;color:#3d3d3d;font-weight:normal;transform:scaleX(0.785);">883</div>
<div class="t" style="left:61.00px;top:457.09px;font-size:13px;line-height:13px;color:#3d3d3d;font-weight:normal;transform:scaleX(0.8);">25.09.2025 0:51:00, 4 003</div>
<div class="t" style="left:240.70px;top:457.09px;font-size:13px;line-height:13px;color:#3d3d3d;font-weight:normal;transform:scaleX(0.785);">DBPOSTGRS</div>
<div class="t tr" style="right:975.20px;top:457.09px;font-size:13px;line-height:13px;color:#3d3d3d;font-weight:normal;transform:scaleX(0.785);">997</div>
<div class="t tr" style="right:953.60px;top:457.09px;font-size:13px;line-height:13px;color:#3d3d3d;font-weight:normal;transform:scaleX(0.9);">мкс</div>
<div class="t" style="left:482.90px;top:457.09px;font-size:13px;line-height:13px;color:#3b3f5a;font-weight:normal;transform:scaleX(0.785);">CICD</div>
<div class="t" style="left:596.80px;top:457.09px;font-size:13px;line-height:13px;color:#3b3f5a;font-weight:normal;transform:scaleX(0.775);">Background job</div>
<div class="a" style="left:10.00px;top:489.80px;width:685.00px;height:1.00px;background:#e4e4e4"></div>
<div class="t tr" style="right:1375.20px;top:475.20px;font-size:13px;line-height:13px;color:#3d3d3d;font-weight:normal;transform:scaleX(0.785);">884</div>
<div class="t" style="left:61.00px;top:475.20px;font-size:13px;line-height:13px;color:#3d3d3d;font-weight:normal;transform:scaleX(0.8);">25.09.2025 0:51:00, 3 002</div>
<div class="t" style="left:240.70px;top:475.20px;font-size:13px;line-height:13px;color:#3d3d3d;font-weight:normal;transform:scaleX(0.785);">DBPOSTGRS</div>
<div class="t tr" style="right:975.20px;top:475.20px;font-size:13px;line-height:13px;color:#3d3d3d;font-weight:normal;transform:scaleX(0.785);">1</div>
<div class="t tr" style="right:953.60px;top:475.20px;font-size:13px;line-height:13px;color:#3d3d3d;font-weight:normal;transform:scaleX(0.9);">мкс</div>
<div class="t" style="left:482.90px;top:475.20px;font-size:13px;line-height:13px;color:#3b3f5a;font-weight:normal;transform:scaleX(0.785);">CICD</div>
<div class="t" style="left:596.80px;top:475.20px;font-size:13px;line-height:13px;color:#3b3f5a;font-weight:normal;transform:scaleX(0.775);">Background job</div>
<div class="a" style="left:10.00px;top:507.91px;width:685.00px;height:1.00px;background:#e4e4e4"></div>
<div class="t tr" style="right:1375.20px;top:493.31px;font-size:13px;line-height:13px;color:#3d3d3d;font-weight:normal;transform:scaleX(0.785);">885</div>
<div class="t" style="left:61.00px;top:493.31px;font-size:13px;line-height:13px;color:#3d3d3d;font-weight:normal;transform:scaleX(0.8);">25.09.2025 0:50:59, 978 002</div>
<div class="t" style="left:240.70px;top:493.31px;font-size:13px;line-height:13px;color:#3d3d3d;font-weight:normal;transform:scaleX(0.785);">DBPOSTGRS</div>
<div class="t tr" style="right:975.20px;top:493.31px;font-size:13px;line-height:13px;color:#3d3d3d;font-weight:normal;transform:scaleX(0.785);">998</div>
<div class="t tr" style="right:953.60px;top:493.31px;font-size:13px;line-height:13px;color:#3d3d3d;font-weight:normal;transform:scaleX(0.9);">мкс</div>
<div class="t" style="left:482.90px;top:493.31px;font-size:13px;line-height:13px;color:#3b3f5a;font-weight:normal;transform:scaleX(0.785);">proapdex</div>
<div class="t" style="left:596.80px;top:493.31px;font-size:13px;line-height:13px;color:#3b3f5a;font-weight:normal;transform:scaleX(0.775);">Background job</div>
<div class="a" style="left:10.00px;top:526.02px;width:685.00px;height:1.00px;background:#e4e4e4"></div>
<div class="t tr" style="right:1375.20px;top:511.42px;font-size:13px;line-height:13px;color:#3d3d3d;font-weight:normal;transform:scaleX(0.785);">886</div>
<div class="t" style="left:61.00px;top:511.42px;font-size:13px;line-height:13px;color:#3d3d3d;font-weight:normal;transform:scaleX(0.8);">25.09.2025 0:50:59, 781 006</div>
<div class="t" style="left:240.70px;top:511.42px;font-size:13px;line-height:13px;color:#3d3d3d;font-weight:normal;transform:scaleX(0.785);">DBPOSTGRS</div>
<div class="t tr" style="right:975.20px;top:511.42px;font-size:13px;line-height:13px;color:#3d3d3d;font-weight:normal;transform:scaleX(0.785);">1</div>
<div class="t tr" style="right:953.60px;top:511.42px;font-size:13px;line-height:13px;color:#3d3d3d;font-weight:normal;transform:scaleX(0.9);">мкс</div>
<div class="t" style="left:482.90px;top:511.42px;font-size:13px;line-height:13px;color:#3b3f5a;font-weight:normal;transform:scaleX(0.785);">CICD</div>
<div class="t" style="left:596.80px;top:511.42px;font-size:13px;line-height:13px;color:#3b3f5a;font-weight:normal;transform:scaleX(0.775);">Background job</div>
<div class="a" style="left:10.00px;top:544.13px;width:685.00px;height:1.00px;background:#e4e4e4"></div>
<div class="t tr" style="right:1375.20px;top:529.53px;font-size:13px;line-height:13px;color:#3d3d3d;font-weight:normal;transform:scaleX(0.785);">887</div>
<div class="t" style="left:61.00px;top:529.53px;font-size:13px;line-height:13px;color:#3d3d3d;font-weight:normal;transform:scaleX(0.8);">25.09.2025 0:50:59, 780 004</div>
<div class="t" style="left:240.70px;top:529.53px;font-size:13px;line-height:13px;color:#3d3d3d;font-weight:normal;transform:scaleX(0.785);">DBPOSTGRS</div>
<div class="t tr" style="right:975.20px;top:529.53px;font-size:13px;line-height:13px;color:#3d3d3d;font-weight:normal;transform:scaleX(0.785);">996</div>
<div class="t tr" style="right:953.60px;top:529.53px;font-size:13px;line-height:13px;color:#3d3d3d;font-weight:normal;transform:scaleX(0.9);">мкс</div>
<div class="t" style="left:482.90px;top:529.53px;font-size:13px;line-height:13px;color:#3b3f5a;font-weight:normal;transform:scaleX(0.785);">CICD</div>
<div class="t" style="left:596.80px;top:529.53px;font-size:13px;line-height:13px;color:#3b3f5a;font-weight:normal;transform:scaleX(0.775);">Background job</div>
<div class="a" style="left:10.00px;top:562.24px;width:685.00px;height:1.00px;background:#e4e4e4"></div>
<div class="t tr" style="right:1375.20px;top:547.64px;font-size:13px;line-height:13px;color:#3d3d3d;font-weight:normal;transform:scaleX(0.785);">888</div>
<div class="t" style="left:61.00px;top:547.64px;font-size:13px;line-height:13px;color:#3d3d3d;font-weight:normal;transform:scaleX(0.8);">25.09.2025 0:50:59, 697 004</div>
<div class="t" style="left:240.70px;top:547.64px;font-size:13px;line-height:13px;color:#3d3d3d;font-weight:normal;transform:scaleX(0.785);">DBPOSTGRS</div>
<div class="t tr" style="right:975.20px;top:547.64px;font-size:13px;line-height:13px;color:#3d3d3d;font-weight:normal;transform:scaleX(0.785);">996</div>
<div class="t tr" style="right:953.60px;top:547.64px;font-size:13px;line-height:13px;color:#3d3d3d;font-weight:normal;transform:scaleX(0.9);">мкс</div>
<div class="t" style="left:482.90px;top:547.64px;font-size:13px;line-height:13px;color:#3b3f5a;font-weight:normal;transform:scaleX(0.785);">proapdex</div>
<div class="t" style="left:596.80px;top:547.64px;font-size:13px;line-height:13px;color:#3b3f5a;font-weight:normal;transform:scaleX(0.775);">Background job</div>
<div class="a" style="left:10.00px;top:580.35px;width:685.00px;height:1.00px;background:#e4e4e4"></div>
<div class="t tr" style="right:1375.20px;top:565.75px;font-size:13px;line-height:13px;color:#3d3d3d;font-weight:normal;transform:scaleX(0.785);">889</div>
<div class="t" style="left:61.00px;top:565.75px;font-size:13px;line-height:13px;color:#3d3d3d;font-weight:normal;transform:scaleX(0.8);">25.09.2025 0:50:59, 537 003</div>
<div class="t" style="left:240.70px;top:565.75px;font-size:13px;line-height:13px;color:#3d3d3d;font-weight:normal;transform:scaleX(0.785);">VRSRESPONSE</div>
<div class="t" style="left:482.90px;top:565.75px;font-size:13px;line-height:13px;color:#3b3f5a;font-weight:normal;transform:scaleX(0.785);">proapdex</div>
<div class="t" style="left:596.80px;top:565.75px;font-size:13px;line-height:13px;color:#3b3f5a;font-weight:normal;transform:scaleX(0.775);">Web server extension</div>
<div class="a" style="left:10.00px;top:598.46px;width:685.00px;height:1.00px;background:#e4e4e4"></div>
<div class="t tr" style="right:1375.20px;top:583.86px;font-size:13px;line-height:13px;color:#3d3d3d;font-weight:normal;transform:scaleX(0.785);">890</div>
<div class="t" style="left:61.00px;top:583.86px;font-size:13px;line-height:13px;color:#3d3d3d;font-weight:normal;transform:scaleX(0.8);">25.09.2025 0:50:59, 535 006</div>
<div class="t" style="left:240.70px;top:583.86px;font-size:13px;line-height:13px;color:#3d3d3d;font-weight:normal;transform:scaleX(0.785);">DBPOSTGRS</div>
<div class="t tr" style="right:975.20px;top:583.86px;font-size:13px;line-height:13px;color:#3d3d3d;font-weight:normal;transform:scaleX(0.785);">994</div>
<div class="t tr" style="right:953.60px;top:583.86px;font-size:13px;line-height:13px;color:#3d3d3d;font-weight:normal;transform:scaleX(0.9);">мкс</div>
<div class="t" style="left:482.90px;top:583.86px;font-size:13px;line-height:13px;color:#3b3f5a;font-weight:normal;transform:scaleX(0.785);">proapdex</div>
<div class="t" style="left:596.80px;top:583.86px;font-size:13px;line-height:13px;color:#3b3f5a;font-weight:normal;transform:scaleX(0.775);">Web server extension</div>
<div class="a" style="left:10.00px;top:616.57px;width:685.00px;height:1.00px;background:#e4e4e4"></div>
<div class="t tr" style="right:1375.20px;top:601.97px;font-size:13px;line-height:13px;color:#3d3d3d;font-weight:normal;transform:scaleX(0.785);">891</div>
<div class="t" style="left:61.00px;top:601.97px;font-size:13px;line-height:13px;color:#3d3d3d;font-weight:normal;transform:scaleX(0.8);">25.09.2025 0:50:59, 533 003</div>
<div class="t" style="left:240.70px;top:601.97px;font-size:13px;line-height:13px;color:#3d3d3d;font-weight:normal;transform:scaleX(0.785);">DBPOSTGRS</div>
<div class="t tr" style="right:975.20px;top:601.97px;font-size:13px;line-height:13px;color:#3d3d3d;font-weight:normal;transform:scaleX(0.785);">997</div>
<div class="t tr" style="right:953.60px;top:601.97px;font-size:13px;line-height:13px;color:#3d3d3d;font-weight:normal;transform:scaleX(0.9);">мкс</div>
<div class="t" style="left:482.90px;top:601.97px;font-size:13px;line-height:13px;color:#3b3f5a;font-weight:normal;transform:scaleX(0.785);">proapdex</div>
<div class="t" style="left:596.80px;top:601.97px;font-size:13px;line-height:13px;color:#3b3f5a;font-weight:normal;transform:scaleX(0.775);">Web server extension</div>
<div class="a" style="left:10.00px;top:634.68px;width:685.00px;height:1.00px;background:#e4e4e4"></div>
<div class="t tr" style="right:1375.20px;top:620.08px;font-size:13px;line-height:13px;color:#3d3d3d;font-weight:normal;transform:scaleX(0.785);">892</div>
<div class="t" style="left:61.00px;top:620.08px;font-size:13px;line-height:13px;color:#3d3d3d;font-weight:normal;transform:scaleX(0.8);">25.09.2025 0:50:59, 533 001</div>
<div class="t" style="left:240.70px;top:620.08px;font-size:13px;line-height:13px;color:#3d3d3d;font-weight:normal;transform:scaleX(0.785);">VRSREQUEST</div>
<div class="t" style="left:482.90px;top:620.08px;font-size:13px;line-height:13px;color:#3b3f5a;font-weight:normal;transform:scaleX(0.785);">proapdex</div>
<div class="t" style="left:596.80px;top:620.08px;font-size:13px;line-height:13px;color:#3b3f5a;font-weight:normal;transform:scaleX(0.775);">Web server extension</div>
<div class="a" style="left:8.00px;top:636.09px;width:687.00px;height:17.11px;background:#fdf2c6"></div>
<div class="a" style="left:56.00px;top:636.09px;width:1.00px;height:17.11px;background:#fffbea"></div>
<div class="a" style="left:236.50px;top:636.09px;width:1.00px;height:17.11px;background:#fffbea"></div>
<div class="a" style="left:478.80px;top:636.09px;width:1.00px;height:17.11px;background:#fffbea"></div>
<div class="a" style="left:592.60px;top:636.09px;width:1.00px;height:17.11px;background:#fffbea"></div>
<div class="a" style="left:350.60px;top:636.09px;width:127.40px;height:17.01px;background:#fde598;border:2px solid #f5c21b;box-sizing:border-box"></div>
<div class="a" style="left:10.00px;top:652.79px;width:685.00px;height:1.00px;background:#e4e4e4"></div>
<div class="t tr" style="right:1375.20px;top:638.19px;font-size:13px;line-height:13px;color:#3d3d3d;font-weight:normal;transform:scaleX(0.785);">893</div>
<div class="t" style="left:61.00px;top:638.19px;font-size:13px;line-height:13px;color:#3d3d3d;font-weight:normal;transform:scaleX(0.8);">25.09.2025 0:50:59, 521 002</div>
<div class="t" style="left:240.70px;top:638.19px;font-size:13px;line-height:13px;color:#3d3d3d;font-weight:normal;transform:scaleX(0.785);">DBPOSTGRS</div>
<div class="t tr" style="right:975.20px;top:638.19px;font-size:13px;line-height:13px;color:#3d3d3d;font-weight:normal;transform:scaleX(0.785);">998</div>
<div class="t tr" style="right:953.60px;top:638.19px;font-size:13px;line-height:13px;color:#3d3d3d;font-weight:normal;transform:scaleX(0.9);">мкс</div>
<div class="t" style="left:482.90px;top:638.19px;font-size:13px;line-height:13px;color:#3b3f5a;font-weight:normal;transform:scaleX(0.785);">proapdex</div>
<div class="t" style="left:596.80px;top:638.19px;font-size:13px;line-height:13px;color:#3b3f5a;font-weight:normal;transform:scaleX(0.775);">Background job</div>
<div class="a" style="left:10.00px;top:670.90px;width:685.00px;height:1.00px;background:#e4e4e4"></div>
<div class="t tr" style="right:1375.20px;top:656.30px;font-size:13px;line-height:13px;color:#3d3d3d;font-weight:normal;transform:scaleX(0.785);">894</div>
<div class="t" style="left:61.00px;top:656.30px;font-size:13px;line-height:13px;color:#3d3d3d;font-weight:normal;transform:scaleX(0.8);">25.09.2025 0:50:59, 299 006</div>
<div class="t" style="left:240.70px;top:656.30px;font-size:13px;line-height:13px;color:#3d3d3d;font-weight:normal;transform:scaleX(0.785);">DBPOSTGRS</div>
<div class="t tr" style="right:975.20px;top:656.30px;font-size:13px;line-height:13px;color:#3d3d3d;font-weight:normal;transform:scaleX(0.785);">1</div>
<div class="t tr" style="right:953.60px;top:656.30px;font-size:13px;line-height:13px;color:#3d3d3d;font-weight:normal;transform:scaleX(0.9);">мкс</div>
<div class="t" style="left:482.90px;top:656.30px;font-size:13px;line-height:13px;color:#3b3f5a;font-weight:normal;transform:scaleX(0.785);">infra</div>
<div class="t" style="left:596.80px;top:656.30px;font-size:13px;line-height:13px;color:#3b3f5a;font-weight:normal;transform:scaleX(0.775);">Web server extension</div>
<div class="a" style="left:10.00px;top:689.01px;width:685.00px;height:1.00px;background:#e4e4e4"></div>
<div class="t tr" style="right:1375.20px;top:674.41px;font-size:13px;line-height:13px;color:#3d3d3d;font-weight:normal;transform:scaleX(0.785);">895</div>
<div class="t" style="left:61.00px;top:674.41px;font-size:13px;line-height:13px;color:#3d3d3d;font-weight:normal;transform:scaleX(0.8);">25.09.2025 0:50:59, 298 010</div>
<div class="t" style="left:240.70px;top:674.41px;font-size:13px;line-height:13px;color:#3d3d3d;font-weight:normal;transform:scaleX(0.785);">DBPOSTGRS</div>
<div class="t tr" style="right:975.20px;top:674.41px;font-size:13px;line-height:13px;color:#3d3d3d;font-weight:normal;transform:scaleX(0.785);">990</div>
<div class="t tr" style="right:953.60px;top:674.41px;font-size:13px;line-height:13px;color:#3d3d3d;font-weight:normal;transform:scaleX(0.9);">мкс</div>
<div class="t" style="left:482.90px;top:674.41px;font-size:13px;line-height:13px;color:#3b3f5a;font-weight:normal;transform:scaleX(0.785);">infra</div>
<div class="t" style="left:596.80px;top:674.41px;font-size:13px;line-height:13px;color:#3b3f5a;font-weight:normal;transform:scaleX(0.775);">Web server extension</div>
<div class="a" style="left:10.00px;top:707.12px;width:685.00px;height:1.00px;background:#e4e4e4"></div>
<div class="t tr" style="right:1375.20px;top:692.52px;font-size:13px;line-height:13px;color:#3d3d3d;font-weight:normal;transform:scaleX(0.785);">896</div>
<div class="t" style="left:61.00px;top:692.52px;font-size:13px;line-height:13px;color:#3d3d3d;font-weight:normal;transform:scaleX(0.8);">25.09.2025 0:50:59, 298 005</div>
<div class="t" style="left:240.70px;top:692.52px;font-size:13px;line-height:13px;color:#3d3d3d;font-weight:normal;transform:scaleX(0.785);">DBPOSTGRS</div>
<div class="t tr" style="right:975.20px;top:692.52px;font-size:13px;line-height:13px;color:#3d3d3d;font-weight:normal;transform:scaleX(0.785);">1</div>
<div class="t tr" style="right:953.60px;top:692.52px;font-size:13px;line-height:13px;color:#3d3d3d;font-weight:normal;transform:scaleX(0.9);">мкс</div>
<div class="t" style="left:482.90px;top:692.52px;font-size:13px;line-height:13px;color:#3b3f5a;font-weight:normal;transform:scaleX(0.785);">infra</div>
<div class="t" style="left:596.80px;top:692.52px;font-size:13px;line-height:13px;color:#3b3f5a;font-weight:normal;transform:scaleX(0.775);">Web server extension</div>
<div class="a" style="left:10.00px;top:725.23px;width:685.00px;height:1.00px;background:#e4e4e4"></div>
<div class="t tr" style="right:1375.20px;top:710.63px;font-size:13px;line-height:13px;color:#3d3d3d;font-weight:normal;transform:scaleX(0.785);">897</div>
<div class="t" style="left:61.00px;top:710.63px;font-size:13px;line-height:13px;color:#3d3d3d;font-weight:normal;transform:scaleX(0.8);">25.09.2025 0:50:59, 295 005</div>
<div class="t" style="left:240.70px;top:710.63px;font-size:13px;line-height:13px;color:#3d3d3d;font-weight:normal;transform:scaleX(0.785);">DBPOSTGRS</div>
<div class="t tr" style="right:975.20px;top:710.63px;font-size:13px;line-height:13px;color:#3d3d3d;font-weight:normal;transform:scaleX(0.785);">1</div>
<div class="t tr" style="right:953.60px;top:710.63px;font-size:13px;line-height:13px;color:#3d3d3d;font-weight:normal;transform:scaleX(0.9);">мкс</div>
<div class="t" style="left:482.90px;top:710.63px;font-size:13px;line-height:13px;color:#3b3f5a;font-weight:normal;transform:scaleX(0.785);">infra</div>
<div class="t" style="left:596.80px;top:710.63px;font-size:13px;line-height:13px;color:#3b3f5a;font-weight:normal;transform:scaleX(0.775);">Web server extension</div>
<div class="a" style="left:10.00px;top:743.34px;width:685.00px;height:1.00px;background:#e4e4e4"></div>
<div class="t tr" style="right:1375.20px;top:728.74px;font-size:13px;line-height:13px;color:#3d3d3d;font-weight:normal;transform:scaleX(0.785);">898</div>
<div class="t" style="left:61.00px;top:728.74px;font-size:13px;line-height:13px;color:#3d3d3d;font-weight:normal;transform:scaleX(0.8);">25.09.2025 0:50:59, 295 002</div>
<div class="t" style="left:240.70px;top:728.74px;font-size:13px;line-height:13px;color:#3d3d3d;font-weight:normal;transform:scaleX(0.785);">DBPOSTGRS</div>
<div class="t tr" style="right:975.20px;top:728.74px;font-size:13px;line-height:13px;color:#3d3d3d;font-weight:normal;transform:scaleX(0.785);">1</div>
<div class="t tr" style="right:953.60px;top:728.74px;font-size:13px;line-height:13px;color:#3d3d3d;font-weight:normal;transform:scaleX(0.9);">мкс</div>
<div class="t" style="left:482.90px;top:728.74px;font-size:13px;line-height:13px;color:#3b3f5a;font-weight:normal;transform:scaleX(0.785);">infra</div>
<div class="t" style="left:596.80px;top:728.74px;font-size:13px;line-height:13px;color:#3b3f5a;font-weight:normal;transform:scaleX(0.775);">Web server extension</div>
<div class="a" style="left:10.00px;top:761.45px;width:685.00px;height:1.00px;background:#e4e4e4"></div>
<div class="t tr" style="right:1375.20px;top:746.85px;font-size:13px;line-height:13px;color:#3d3d3d;font-weight:normal;transform:scaleX(0.785);">899</div>
<div class="t" style="left:61.00px;top:746.85px;font-size:13px;line-height:13px;color:#3d3d3d;font-weight:normal;transform:scaleX(0.8);">25.09.2025 0:50:59, 292 002</div>
<div class="t" style="left:240.70px;top:746.85px;font-size:13px;line-height:13px;color:#3d3d3d;font-weight:normal;transform:scaleX(0.785);">DBPOSTGRS</div>
<div class="t tr" style="right:975.20px;top:746.85px;font-size:13px;line-height:13px;color:#3d3d3d;font-weight:normal;transform:scaleX(0.785);">1</div>
<div class="t tr" style="right:953.60px;top:746.85px;font-size:13px;line-height:13px;color:#3d3d3d;font-weight:normal;transform:scaleX(0.9);">мкс</div>
<div class="t" style="left:482.90px;top:746.85px;font-size:13px;line-height:13px;color:#3b3f5a;font-weight:normal;transform:scaleX(0.785);">infra</div>
<div class="t" style="left:596.80px;top:746.85px;font-size:13px;line-height:13px;color:#3b3f5a;font-weight:normal;transform:scaleX(0.775);">Web server extension</div>
<div class="a" style="left:10.00px;top:779.56px;width:685.00px;height:1.00px;background:#e4e4e4"></div>
<div class="t tr" style="right:1375.20px;top:764.96px;font-size:13px;line-height:13px;color:#3d3d3d;font-weight:normal;transform:scaleX(0.785);">900</div>
<div class="t" style="left:61.00px;top:764.96px;font-size:13px;line-height:13px;color:#3d3d3d;font-weight:normal;transform:scaleX(0.8);">25.09.2025 0:50:59, 291 002</div>
<div class="t" style="left:240.70px;top:764.96px;font-size:13px;line-height:13px;color:#3d3d3d;font-weight:normal;transform:scaleX(0.785);">DBPOSTGRS</div>
<div class="t tr" style="right:975.20px;top:764.96px;font-size:13px;line-height:13px;color:#3d3d3d;font-weight:normal;transform:scaleX(0.785);">998</div>
<div class="t tr" style="right:953.60px;top:764.96px;font-size:13px;line-height:13px;color:#3d3d3d;font-weight:normal;transform:scaleX(0.9);">мкс</div>
<div class="t" style="left:482.90px;top:764.96px;font-size:13px;line-height:13px;color:#3b3f5a;font-weight:normal;transform:scaleX(0.785);">infra</div>
<div class="t" style="left:596.80px;top:764.96px;font-size:13px;line-height:13px;color:#3b3f5a;font-weight:normal;transform:scaleX(0.775);">Web server extension</div>
<svg class="a" style="left:698px;top:98.5px" width="8" height="5" viewBox="0 0 8 5"><path d="M0.3 4.5 L7.2 4.5 L3.75 0.6 Z" fill="#333"/></svg>
<div class="a" style="left:698.00px;top:112.40px;width:7.20px;height:648.60px;background:#d6d6d6;border-radius:3.6px"></div>
<div class="a" style="left:698.00px;top:283.80px;width:7.20px;height:477.20px;background:#9c9c9c;border-radius:3.6px"></div>
<svg class="a" style="left:698.5px;top:771px" width="7" height="5" viewBox="0 0 7 5"><path d="M0.2 0.4 L6.6 0.4 L3.4 3.8 Z" fill="#b4b4b4"/></svg>
<svg class="a" style="left:16px;top:786px" width="6" height="9" viewBox="0 0 6 9"><path d="M5.5 0.5 L5.5 8.5 L0.8 4.5 Z" fill="#b0b0b0"/></svg>
<div class="a" style="left:30.00px;top:786.40px;width:643.00px;height:7.40px;background:#d6d6d6;border-radius:3.7px"></div>
<div class="a" style="left:30.00px;top:786.40px;width:349.00px;height:7.40px;background:#9c9c9c;border-radius:3.7px"></div>
<svg class="a" style="left:682px;top:787.2px" width="5" height="6" viewBox="0 0 5 6"><path d="M0.3 0.2 L0.3 5.6 L4.3 2.9 Z" fill="#333"/></svg>
<div class="a" style="left:712px;top:90px;width:0;height:707px;border-left:1px dashed #c4c4c4"></div>
<div class="a" style="left:7.30px;top:803.50px;width:45.90px;height:19.90px;border:1px solid #b9b9b9;border-bottom-color:#9d9d9d;border-radius:3px;background:linear-gradient(#fff,#f1f1f1);box-sizing:border-box;box-shadow:0 1px 0 #d6d6d6"></div>
<svg class="a" style="left:24px;top:809px" width="12" height="9" viewBox="0 0 12 9"><rect x="1.5" y="1.2" width="1.6" height="6.8" fill="#1f4fbf"/><path d="M10.5 1 L10.5 8.2 L4.6 4.6 Z" fill="#1f4fbf"/></svg>
<div class="a" style="left:60.40px;top:803.50px;width:45.60px;height:19.90px;border:1px solid #b9b9b9;border-bottom-color:#9d9d9d;border-radius:3px;background:linear-gradient(#fff,#f1f1f1);box-sizing:border-box;box-shadow:0 1px 0 #d6d6d6"></div>
<svg class="a" style="left:79px;top:809px" width="9" height="9" viewBox="0 0 9 9"><path d="M7.3 1 L7.3 8.2 L1.4 4.6 Z" fill="#1f4fbf"/></svg>
<div class="t" style="left:113.70px;top:807.90px;font-size:13px;line-height:13px;color:#666;font-weight:normal;transform:scaleX(0.77);">Страница:</div>
<div class="t" style="left:166.90px;top:807.90px;font-size:13px;line-height:13px;color:#333;font-weight:normal;transform:scaleX(0.785);">18</div>
<div class="a" style="left:717.30px;top:110.20px;width:702.70px;height:687.60px;border:1px solid #bdbdbd;box-sizing:border-box;background:#fff"></div>
<div class="a" style="left:717.30px;top:89.50px;width:62.50px;height:21.50px;border:1px solid #c4c4c4;border-bottom:none;border-radius:3px 3px 0 0;background:#ececec;box-sizing:border-box;box-shadow:inset 1px 1px 0 #f6f6f6"></div>
<div class="a" style="left:779.00px;top:89.50px;width:137.20px;height:21.50px;border:1px solid #c4c4c4;border-bottom:none;border-radius:3px 3px 0 0;background:#ececec;box-sizing:border-box;box-shadow:inset 1px 1px 0 #f6f6f6"></div>
<div class="a" style="left:1015.60px;top:89.50px;width:64.70px;height:21.50px;border:1px solid #c4c4c4;border-bottom:none;border-radius:3px 3px 0 0;background:#ececec;box-sizing:border-box;box-shadow:inset 1px 1px 0 #f6f6f6"></div>
<div class="a" style="left:915.70px;top:89.30px;width:100.30px;height:22.00px;border:1px solid #c6c6c6;border-bottom:none;border-radius:3px 3px 0 0;background:#fff;box-sizing:border-box"></div>
<div class="t" style="left:725.30px;top:93.00px;font-size:13px;line-height:13px;color:#4a4a4a;font-weight:normal;transform:scaleX(0.785);">Атрибуты</div>
<div class="t" style="left:787.10px;top:93.00px;font-size:13px;line-height:13px;color:#4a4a4a;font-weight:normal;transform:scaleX(0.79);">Значения доп. атрибутов</div>
<div class="t" style="left:924.40px;top:93.00px;font-size:13px;line-height:13px;color:#333;font-weight:normal;transform:scaleX(0.825);">Контекст вызова</div>
<div class="t" style="left:1023.60px;top:93.00px;font-size:13px;line-height:13px;color:#4a4a4a;font-weight:normal;transform:scaleX(0.79);">Описание</div>
<div class="t" style="left:725.70px;top:115.50px;font-size:15px;line-height:15px;color:#27a05e;font-weight:normal;transform:scaleX(0.8);">Общая информация</div>
<div class="t" style="left:727.00px;top:136.30px;font-size:13px;line-height:13px;color:#3766c4;font-weight:normal;transform:scaleX(0.804);">пБот = Константы.ТокенБотаТелеграм.Получить(); - ОбщийМодуль.МодульТелеграм.Модуль : 93</div>
<div class="a" style="left:727.00px;top:148.50px;width:470.70px;height:1.20px;background:#6088d4"></div>
<div class="t" style="left:725.60px;top:159.00px;font-size:13px;line-height:13px;color:#4a4a4a;font-weight:normal;transform:scaleX(0.795);">Команда платформы:</div>
<div class="a" style="left:834.50px;top:157.30px;width:577.50px;height:18.30px;border:1px solid #d2d2d2;border-radius:3px;background:#fff;box-sizing:border-box;box-shadow:inset 0 1px 0 #f0f0f0"></div>
<div class="t" style="left:837.00px;top:159.90px;font-size:13px;line-height:13px;color:#333;font-weight:normal;transform:scaleX(0.8);">&lt;Нет&gt;</div>
<div class="a" style="left:1390.60px;top:157.80px;width:1.00px;height:17.30px;background:#e2e2e2"></div>
<svg class="a" style="left:1396.5px;top:161.60000000000002px" width="11" height="10" viewBox="0 0 11 10"><path d="M3.3 3.2 H1.1 V8.9 H6.6 V6.8" fill="none" stroke="#505050" stroke-width="1.1"/><rect x="4" y="0.9" width="5.4" height="5.1" fill="none" stroke="#505050" stroke-width="1.1"/></svg>
<div class="t" style="left:725.60px;top:184.20px;font-size:13px;line-height:13px;color:#4a4a4a;font-weight:normal;transform:scaleX(0.8);">Глубина стека:</div>
<div class="a" style="left:834.30px;top:182.20px;width:84.20px;height:18.10px;border:1px solid #d2d2d2;border-radius:3px;background:#fff;box-sizing:border-box;box-shadow:inset 0 1px 0 #f0f0f0"></div>
<div class="t tr" style="right:512.30px;top:184.80px;font-size:13px;line-height:13px;color:#333;font-weight:normal;transform:scaleX(0.785);">2</div>
<div class="t" style="left:725.60px;top:205.80px;font-size:15px;line-height:15px;color:#27a05e;font-weight:normal;transform:scaleX(0.817);">Вызов</div>
<div class="t" style="left:725.60px;top:228.20px;font-size:13px;line-height:13px;color:#4a4a4a;font-weight:normal;transform:scaleX(0.79);">Место:</div>
<div class="a" style="left:801.20px;top:226.00px;width:610.80px;height:18.40px;border:1px solid #d2d2d2;border-radius:3px;background:#fff;box-sizing:border-box;box-shadow:inset 0 1px 0 #f0f0f0"></div>
<div class="t" style="left:803.70px;top:228.60px;font-size:13px;line-height:13px;color:#333;font-weight:normal;transform:scaleX(0.8);">ОбщийМодуль.МодульТелеграм.Модуль</div>
<div class="a" style="left:1390.60px;top:226.50px;width:1.00px;height:17.40px;background:#e2e2e2"></div>
<svg class="a" style="left:1396.5px;top:230.3px" width="11" height="10" viewBox="0 0 11 10"><path d="M3.3 3.2 H1.1 V8.9 H6.6 V6.8" fill="none" stroke="#505050" stroke-width="1.1"/><rect x="4" y="0.9" width="5.4" height="5.1" fill="none" stroke="#505050" stroke-width="1.1"/></svg>
<div class="t" style="left:725.60px;top:252.70px;font-size:13px;line-height:13px;color:#4a4a4a;font-weight:normal;transform:scaleX(0.79);">Строка кода:</div>
<div class="a" style="left:801.20px;top:251.30px;width:610.80px;height:18.10px;border:1px solid #d2d2d2;border-radius:3px;background:#fff;box-sizing:border-box;box-shadow:inset 0 1px 0 #f0f0f0"></div>
<div class="t" style="left:803.70px;top:253.90px;font-size:13px;line-height:13px;color:#333;font-weight:normal;transform:scaleX(0.8);">пБот = Константы.ТокенБотаТелеграм.Получить();</div>
<div class="a" style="left:1390.60px;top:251.80px;width:1.00px;height:17.10px;background:#e2e2e2"></div>
<svg class="a" style="left:1396.5px;top:255.60000000000002px" width="11" height="10" viewBox="0 0 11 10"><path d="M3.3 3.2 H1.1 V8.9 H6.6 V6.8" fill="none" stroke="#505050" stroke-width="1.1"/><rect x="4" y="0.9" width="5.4" height="5.1" fill="none" stroke="#505050" stroke-width="1.1"/></svg>
<div class="t" style="left:725.60px;top:277.70px;font-size:13px;line-height:13px;color:#4a4a4a;font-weight:normal;transform:scaleX(0.79);">Номер строки:</div>
<div class="a" style="left:801.20px;top:275.70px;width:84.20px;height:18.10px;border:1px solid #d2d2d2;border-radius:3px;background:#fff;box-sizing:border-box;box-shadow:inset 0 1px 0 #f0f0f0"></div>
<div class="t tr" style="right:545.40px;top:278.30px;font-size:13px;line-height:13px;color:#333;font-weight:normal;transform:scaleX(0.785);">93</div>
<div class="t" style="left:725.60px;top:299.50px;font-size:15px;line-height:15px;color:#27a05e;font-weight:normal;transform:scaleX(0.8);">Инициация вызова</div>
<div class="t" style="left:725.60px;top:322.10px;font-size:13px;line-height:13px;color:#4a4a4a;font-weight:normal;transform:scaleX(0.79);">Место:</div>
<div class="a" style="left:801.50px;top:320.20px;width:610.50px;height:17.50px;border:1px solid #d2d2d2;border-radius:3px;background:#fff;box-sizing:border-box;box-shadow:inset 0 1px 0 #f0f0f0"></div>
<div class="t" style="left:804.00px;top:322.80px;font-size:13px;line-height:13px;color:#333;font-weight:normal;transform:scaleX(0.8);">ОбщийМодуль.ДоступностьОркестраторов.Модуль</div>
<div class="a" style="left:1390.60px;top:320.70px;width:1.00px;height:16.50px;background:#e2e2e2"></div>
<svg class="a" style="left:1396.5px;top:324.5px" width="11" height="10" viewBox="0 0 11 10"><path d="M3.3 3.2 H1.1 V8.9 H6.6 V6.8" fill="none" stroke="#505050" stroke-width="1.1"/><rect x="4" y="0.9" width="5.4" height="5.1" fill="none" stroke="#505050" stroke-width="1.1"/></svg>
<div class="t" style="left:725.60px;top:346.60px;font-size:13px;line-height:13px;color:#4a4a4a;font-weight:normal;transform:scaleX(0.79);">Строка кода:</div>
<div class="a" style="left:801.50px;top:344.40px;width:610.50px;height:17.90px;border:1px solid #d2d2d2;border-radius:3px;background:#fff;box-sizing:border-box;box-shadow:inset 0 1px 0 #f0f0f0"></div>
<div class="t" style="left:804.00px;top:347.00px;font-size:13px;line-height:13px;color:#333;font-weight:normal;transform:scaleX(0.8);">МодульТелеграм.ОтправитьСообщениеВКаналыКлиента(пТекст,пПолучатели,пОтказ);</div>
<div class="a" style="left:1390.60px;top:344.90px;width:1.00px;height:16.90px;background:#e2e2e2"></div>
<svg class="a" style="left:1396.5px;top:348.7px" width="11" height="10" viewBox="0 0 11 10"><path d="M3.3 3.2 H1.1 V8.9 H6.6 V6.8" fill="none" stroke="#505050" stroke-width="1.1"/><rect x="4" y="0.9" width="5.4" height="5.1" fill="none" stroke="#505050" stroke-width="1.1"/></svg>
<div class="t" style="left:725.60px;top:371.20px;font-size:13px;line-height:13px;color:#4a4a4a;font-weight:normal;transform:scaleX(0.79);">Номер строки:</div>
<div class="a" style="left:801.50px;top:369.30px;width:83.90px;height:18.20px;border:1px solid #d2d2d2;border-radius:3px;background:#fff;box-sizing:border-box;box-shadow:inset 0 1px 0 #f0f0f0"></div>
<div class="t tr" style="right:545.40px;top:371.90px;font-size:13px;line-height:13px;color:#333;font-weight:normal;transform:scaleX(0.785);">91</div>
<div class="a" style="left:725.20px;top:392.90px;width:686.40px;height:398.10px;border:1px solid #a9a9a9;border-top:1.5px solid #a9a9a9;box-sizing:border-box;background:#fff"></div>
<div class="a" style="left:726.30px;top:394.40px;width:684.20px;height:40.40px;background:#f0f0f0"></div>
<div class="a" style="left:726.30px;top:394.50px;width:684.20px;height:1.20px;background:#fbfbfb"></div>
<div class="a" style="left:726.30px;top:394.50px;width:1.10px;height:38.00px;background:#fbfbfb"></div>
<div class="a" style="left:798.80px;top:394.50px;width:1.10px;height:38.50px;background:#d4d4d4"></div>
<div class="a" style="left:799.90px;top:394.50px;width:1.10px;height:38.50px;background:#fbfbfb"></div>
<div class="a" style="left:801.00px;top:412.40px;width:609.50px;height:1.10px;background:#d8d8d8"></div>
<div class="a" style="left:801.00px;top:413.50px;width:609.50px;height:1.10px;background:#fbfbfb"></div>
<div class="a" style="left:1324.80px;top:394.50px;width:1.10px;height:17.90px;background:#d8d8d8"></div>
<div class="a" style="left:1325.90px;top:394.50px;width:1.10px;height:17.90px;background:#fbfbfb"></div>
<div class="a" style="left:726.30px;top:431.70px;width:684.20px;height:1.10px;background:#fbfbfb"></div>
<div class="a" style="left:726.30px;top:432.80px;width:684.20px;height:2.00px;background:#d9d9d9"></div>
<div class="t" style="left:729.80px;top:397.00px;font-size:13px;line-height:13px;color:#4d4d4d;font-weight:normal;transform:scaleX(0.79);">№ вызова</div>
<div class="t" style="left:803.70px;top:397.00px;font-size:13px;line-height:13px;color:#4d4d4d;font-weight:normal;transform:scaleX(0.79);">Место вызова</div>
<div class="t" style="left:1329.00px;top:397.00px;font-size:13px;line-height:13px;color:#4d4d4d;font-weight:normal;transform:scaleX(0.79);">Номер строки</div>
<div class="t" style="left:803.70px;top:417.10px;font-size:13px;line-height:13px;color:#4d4d4d;font-weight:normal;transform:scaleX(0.79);">Строка вызова</div>
<div class="a" style="left:726.30px;top:434.80px;width:684.20px;height:33.70px;background:#fdf2c6"></div>
<div class="a" style="left:726.30px;top:434.80px;width:72.70px;height:33.70px;background:#fde28c"></div>
<div class="a" style="left:799.00px;top:434.80px;width:1.40px;height:33.70px;background:#fff7dc"></div>
<div class="a" style="left:801.00px;top:451.50px;width:609.50px;height:1.10px;background:#fff8df"></div>
<div class="a" style="left:1324.80px;top:434.80px;width:1.10px;height:16.70px;background:#fff8df"></div>
<div class="t tr" style="right:633.60px;top:436.60px;font-size:13px;line-height:13px;color:#333;font-weight:normal;transform:scaleX(0.785);">1</div>
<div class="t" style="left:803.70px;top:436.60px;font-size:13px;line-height:13px;color:#333;font-weight:normal;transform:scaleX(0.8);">ОбщийМодуль.ДоступностьОркестраторов.Модуль</div>
<div class="t tr" style="right:22.00px;top:436.60px;font-size:13px;line-height:13px;color:#333;font-weight:normal;transform:scaleX(0.785);">91</div>
<div class="t" style="left:803.70px;top:455.00px;font-size:13px;line-height:13px;color:#333;font-weight:normal;transform:scaleX(0.806);">МодульТелеграм.ОтправитьСообщениеВКаналыКлиента(пТекст,пПолучатели,пОтказ);</div>
<div class="a" style="left:726.30px;top:468.50px;width:684.20px;height:2.00px;background:#eceef1"></div>
<div class="t tr" style="right:633.60px;top:472.90px;font-size:13px;line-height:13px;color:#333;font-weight:normal;transform:scaleX(0.785);">2</div>
<div class="t" style="left:803.70px;top:472.90px;font-size:13px;line-height:13px;color:#333;font-weight:normal;transform:scaleX(0.8);">ОбщийМодуль.МодульТелеграм.Модуль</div>
<div class="t tr" style="right:22.00px;top:472.90px;font-size:13px;line-height:13px;color:#333;font-weight:normal;transform:scaleX(0.785);">93</div>
<div class="t" style="left:803.70px;top:490.60px;font-size:13px;line-height:13px;color:#333;font-weight:normal;transform:scaleX(0.8);">пБот = Константы.ТокенБотаТелеграм.Получить();</div>
<div class="a" style="left:726.30px;top:506.10px;width:684.20px;height:1.10px;background:#e6e6e6"></div>
<div class="t" style="left:985.50px;top:806.30px;font-size:13px;line-height:13px;color:#555;font-weight:normal;transform:scaleX(0.79);">Выводить по:</div>
<div class="a" style="left:1054.20px;top:804.60px;width:312.10px;height:18.20px;border:1px solid #b0b0b0;border-top-color:#a6a6a6;border-radius:3px;background:#fff;box-sizing:border-box;box-shadow:inset 0 0 0 0.4px #d4d4d4"></div>
<div class="a" style="left:1345.90px;top:805.10px;width:1.00px;height:17.20px;background:#bcbcbc"></div>
<div class="t" style="left:1057.00px;top:806.30px;font-size:13px;line-height:13px;color:#24308a;font-weight:normal;transform:scaleX(0.785);">50</div>
<svg class="a" style="left:1353.5px;top:811.5px" width="6" height="4" viewBox="0 0 6 4"><path d="M0 0 L5 0 L2.5 3 Z" fill="#333"/></svg>
<div class="a" style="left:1374.50px;top:803.60px;width:45.00px;height:19.50px;border:1px solid #b9b9b9;border-bottom-color:#9d9d9d;border-radius:3px;background:linear-gradient(#fff,#f1f1f1);box-sizing:border-box;box-shadow:0 1px 0 #d6d6d6"></div>
<svg class="a" style="left:1393.5px;top:809px" width="8" height="9" viewBox="0 0 8 9"><path d="M1 1 L1 8.2 L6.8 4.6 Z" fill="#1f4fbf"/></svg>
</body></html>
